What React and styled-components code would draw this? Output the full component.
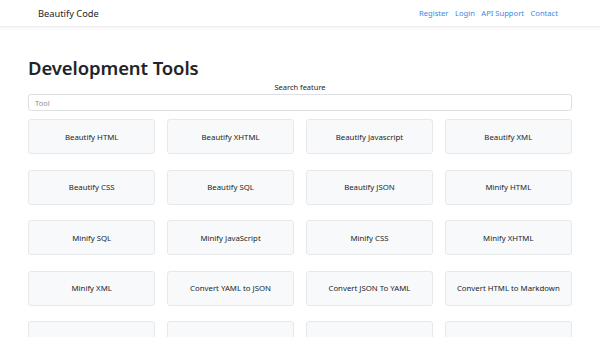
import styled, {createGlobalStyle} from "styled-components";

const GlobalStyle = createGlobalStyle`
	body {
		margin: 0;
		background: #fff;
		font-family: "Noto Sans", "Open Sans", sans-serif;
		color: #212529;
	}
`;

const NavBar = styled.nav`
	display: flex;
	align-items: center;
	justify-content: space-between;
	height: 26px;
	padding: 0 42px 0 38px;
	border-bottom: 1px solid #ececec;
	box-shadow: 0 1px 4px rgba(0, 0, 0, 0.05);
`;

const Brand = styled.a`
	font-size: 9.3px;
	color: #212529;
	text-decoration: none;
`;

const NavLinks = styled.div`
	display: flex;
	gap: 6.5px;
`;

const NavLink = styled.a`
	font-size: 7.6px;
	color: #3a86e8;
	text-decoration: none;
`;

const Container = styled.main`
	width: 544px;
	margin: 0 auto;
	padding-top: 29px;
`;

const Title = styled.h1`
	margin: 0;
	font-size: 18.5px;
	font-weight: 600;
	line-height: 24px;
	letter-spacing: -0.1px;
`;

const SearchLabel = styled.label`
	display: block;
	text-align: center;
	font-size: 7.5px;
	line-height: 10px;
	margin-top: 2px;
	margin-bottom: 2px;
`;

const SearchInput = styled.input`
	box-sizing: border-box;
	display: block;
	width: 100%;
	height: 17px;
	padding: 0 6px;
	border: 1px solid #dcdfe3;
	border-radius: 3px;
	font-family: inherit;
	font-size: 7.5px;
	color: #495057;
	&::placeholder {
		color: #8a9097;
	}
`;

const ToolGrid = styled.div`
	display: grid;
	grid-template-columns: repeat(4, 1fr);
	column-gap: 11.5px;
	row-gap: 15.5px;
	margin-top: 8px;
`;

const ToolCard = styled.a`
	display: flex;
	align-items: center;
	justify-content: center;
	height: 35px;
	background: #f8f9fa;
	border: 1px solid #e6e8eb;
	border-radius: 3px;
	font-size: 7.8px;
	color: #212529;
	text-decoration: none;
	box-sizing: border-box;
`;

const tools = [
	"Beautify HTML",
	"Beautify XHTML",
	"Beautify Javascript",
	"Beautify XML",
	"Beautify CSS",
	"Beautify SQL",
	"Beautify JSON",
	"Minify HTML",
	"Minify SQL",
	"Minify JavaScript",
	"Minify CSS",
	"Minify XHTML",
	"Minify XML",
	"Convert YAML to JSON",
	"Convert JSON To YAML",
	"Convert HTML to Markdown",
	"Convert Markdown to HTML",
	"Convert Unicode to HTML",
	"Convert HTML To Unicode",
	"Convert XML to JSON",
];

export default function App() {
	return (
		<>
			<GlobalStyle />
			<NavBar>
				<Brand href="#">Beautify Code</Brand>
				<NavLinks>
					<NavLink href="#">Register</NavLink>
					<NavLink href="#">Login</NavLink>
					<NavLink href="#">API Support</NavLink>
					<NavLink href="#">Contact</NavLink>
				</NavLinks>
			</NavBar>
			<Container>
				<Title>Development Tools</Title>
				<SearchLabel>Search feature</SearchLabel>
				<SearchInput placeholder="Tool" />
				<ToolGrid>
					{tools.map((t) => (
						<ToolCard href="#" key={t}>
							{t}
						</ToolCard>
					))}
				</ToolGrid>
			</Container>
		</>
	);
}
